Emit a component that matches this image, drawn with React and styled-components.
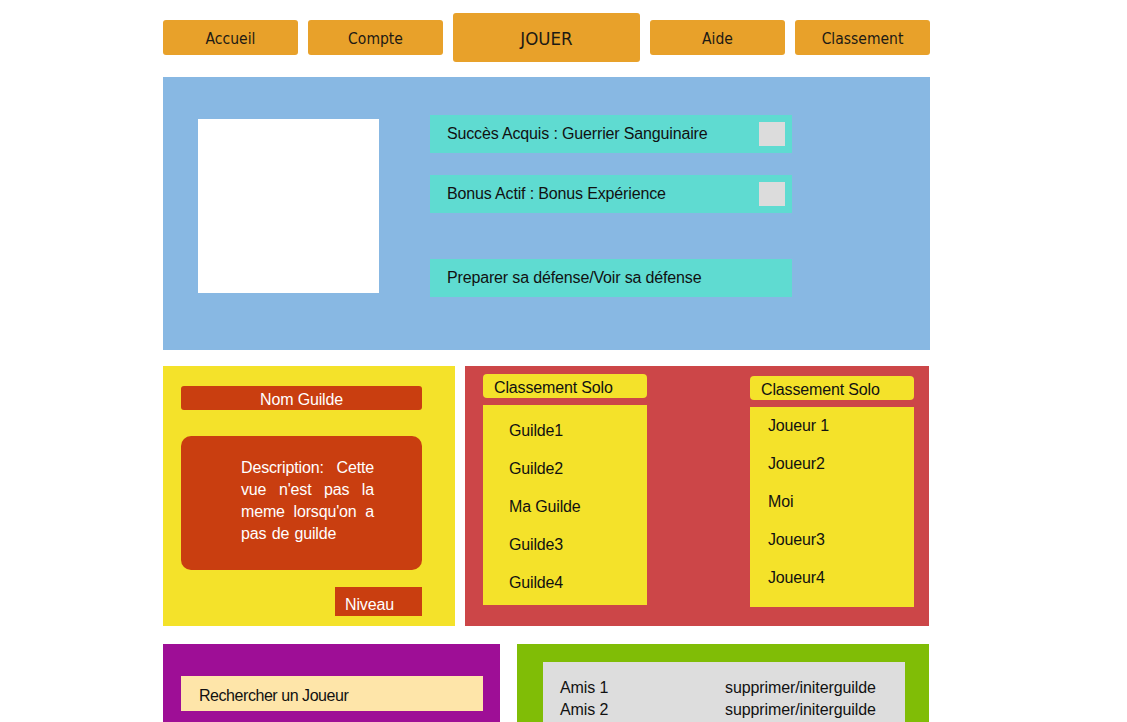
import React from "react"
import styled, { createGlobalStyle } from "styled-components"

const GlobalStyle = createGlobalStyle`
  body {
    margin: 0;
    background: #ffffff;
    font-family: "Liberation Sans", Arial, sans-serif;
    color: #111;
    letter-spacing: -0.15px;
  }
`

const Page = styled.div`
  width: 767px;
  padding: 13px 0 0 163px;
  display: flex;
  flex-direction: column;
`

const Nav = styled.nav`
  display: flex;
  align-items: center;
  gap: 10px;
  height: 49px;
`

const NavButton = styled.div`
  flex: 0 0 ${p => (p.$main ? "187px" : "135px")};
  height: ${p => (p.$main ? "49px" : "35px")};
  box-sizing: border-box;
  padding-top: 2px;
  background: #e8a12a;
  border-radius: 3px;
  display: flex;
  align-items: center;
  justify-content: center;
  font-family: "DejaVu Sans Condensed", "Liberation Sans Narrow", sans-serif;
  font-size: ${p => (p.$main ? "18.5px" : "15.5px")};
  letter-spacing: 0;
  color: #1d1a14;
`

const Profile = styled.section`
  margin-top: 15px;
  height: 273px;
  box-sizing: border-box;
  background: #88b8e3;
  display: flex;
  padding: 38px 35px;
  gap: 51px;
`

const Avatar = styled.div`
  width: 181px;
  height: 174px;
  margin-top: 4px;
  background: #ffffff;
`

const InfoColumn = styled.div`
  display: flex;
  flex-direction: column;
  gap: 22px;
`

const InfoBar = styled.div`
  width: 362px;
  height: 38px;
  box-sizing: border-box;
  padding: 0 7px 0 17px;
  background: #5fdbd1;
  display: flex;
  align-items: center;
  justify-content: space-between;
  font-size: 16px;
  margin-top: ${p => (p.$spaced ? "24px" : "0")};
`

const Check = styled.span`
  width: 26px;
  height: 24px;
  background: #dcdcdc;
`

const Row = styled.div`
  display: flex;
  gap: 10px;
  margin-top: 16px;
`

const GuildPanel = styled.section`
  width: 292px;
  height: 260px;
  box-sizing: border-box;
  background: #f4e22a;
  padding: 20px 33px 0 18px;
  display: flex;
  flex-direction: column;
`

const GuildName = styled.div`
  height: 24px;
  box-sizing: border-box;
  padding-top: 3px;
  border-radius: 3px;
  background: #c93e10;
  color: #fff;
  font-size: 16px;
  display: flex;
  align-items: center;
  justify-content: center;
`

const Description = styled.div`
  margin-top: 26px;
  height: 134px;
  box-sizing: border-box;
  border-radius: 10px;
  background: #c93e10;
  color: #fff;
  padding: 21px 0 0 60px;
`

const DescText = styled.p`
  margin: 0;
  width: 133px;
  font-size: 16px;
  line-height: 22px;
  text-align: justify;
  word-spacing: 1px;
`

const Level = styled.div`
  align-self: flex-end;
  margin-top: 17px;
  width: 87px;
  height: 29px;
  box-sizing: border-box;
  padding: 9px 0 0 10px;
  background: #c93e10;
  color: #fff;
  font-size: 16px;
`

const RankPanel = styled.section`
  width: 464px;
  height: 260px;
  box-sizing: border-box;
  background: #cc4648;
  padding: 8px 15px 0 18px;
  display: flex;
  justify-content: space-between;
`

const RankColumn = styled.div`
  width: 164px;
  margin-top: ${p => p.$offset || 0}px;
  display: flex;
  flex-direction: column;
  gap: 7px;
`

const RankHeader = styled.div`
  height: 24px;
  box-sizing: border-box;
  padding: 3px 0 0 11px;
  border-radius: 4px;
  background: #f4e22a;
  font-size: 16px;
  display: flex;
  align-items: center;
`

const RankList = styled.ul`
  list-style: none;
  margin: 0;
  height: 200px;
  box-sizing: border-box;
  background: #f4e22a;
  padding: ${p => p.$top}px 0 0 ${p => p.$left}px;
`

const RankItem = styled.li`
  height: 38px;
  line-height: 38px;
  font-size: 16px;
`

const BottomRow = styled.div`
  display: flex;
  gap: 17px;
  margin-top: 18px;
  height: 78px;
  overflow: hidden;
`

const SearchPanel = styled.section`
  width: 337px;
  height: 100px;
  box-sizing: border-box;
  background: #9e0e96;
  padding: 32px 0 0 18px;
`

const SearchBox = styled.div`
  width: 302px;
  height: 35px;
  box-sizing: border-box;
  background: #fee5a9;
  padding: 4px 0 0 18px;
  display: flex;
  align-items: center;
  font-size: 16px;
  letter-spacing: -0.45px;
`

const FriendsPanel = styled.section`
  width: 412px;
  height: 100px;
  box-sizing: border-box;
  background: #80bd06;
  padding: 18px 0 0 26px;
`

const FriendsBox = styled.div`
  width: 362px;
  height: 90px;
  box-sizing: border-box;
  background: #dddddd;
  padding: 15px 0 0 17px;
`

const FriendRow = styled.div`
  display: grid;
  grid-template-columns: 165px auto;
  font-size: 16px;
  line-height: 22px;
  letter-spacing: -0.1px;
`

const guilds = ["Guilde1", "Guilde2", "Ma Guilde", "Guilde3", "Guilde4"]
const players = ["Joueur 1", "Joueur2", "Moi", "Joueur3", "Joueur4"]

const App = () => {
  return (
    <>
      <GlobalStyle />
      <Page>
        <Nav>
          <NavButton>Accueil</NavButton>
          <NavButton>Compte</NavButton>
          <NavButton $main>JOUER</NavButton>
          <NavButton>Aide</NavButton>
          <NavButton>Classement</NavButton>
        </Nav>

        <Profile>
          <Avatar />
          <InfoColumn>
            <InfoBar>
              Succès Acquis : Guerrier Sanguinaire
              <Check />
            </InfoBar>
            <InfoBar>
              Bonus Actif : Bonus Expérience
              <Check />
            </InfoBar>
            <InfoBar $spaced>Preparer sa défense/Voir sa défense</InfoBar>
          </InfoColumn>
        </Profile>

        <Row>
          <GuildPanel>
            <GuildName>Nom Guilde</GuildName>
            <Description>
              <DescText>
                Description: Cette vue n'est pas la meme lorsqu'on a pas de guilde
              </DescText>
            </Description>
            <Level>Niveau</Level>
          </GuildPanel>

          <RankPanel>
            <RankColumn>
              <RankHeader>Classement Solo</RankHeader>
              <RankList $top={7} $left={26}>
                {guilds.map(g => (
                  <RankItem key={g}>{g}</RankItem>
                ))}
              </RankList>
            </RankColumn>
            <RankColumn $offset={2}>
              <RankHeader>Classement Solo</RankHeader>
              <RankList $top={0} $left={18}>
                {players.map(p => (
                  <RankItem key={p}>{p}</RankItem>
                ))}
              </RankList>
            </RankColumn>
          </RankPanel>
        </Row>

        <BottomRow>
          <SearchPanel>
            <SearchBox>Rechercher un Joueur</SearchBox>
          </SearchPanel>
          <FriendsPanel>
            <FriendsBox>
              <FriendRow>
                <span>Amis 1</span>
                <span>supprimer/initerguilde</span>
              </FriendRow>
              <FriendRow>
                <span>Amis 2</span>
                <span>supprimer/initerguilde</span>
              </FriendRow>
            </FriendsBox>
          </FriendsPanel>
        </BottomRow>
      </Page>
    </>
  )
}

export default App
